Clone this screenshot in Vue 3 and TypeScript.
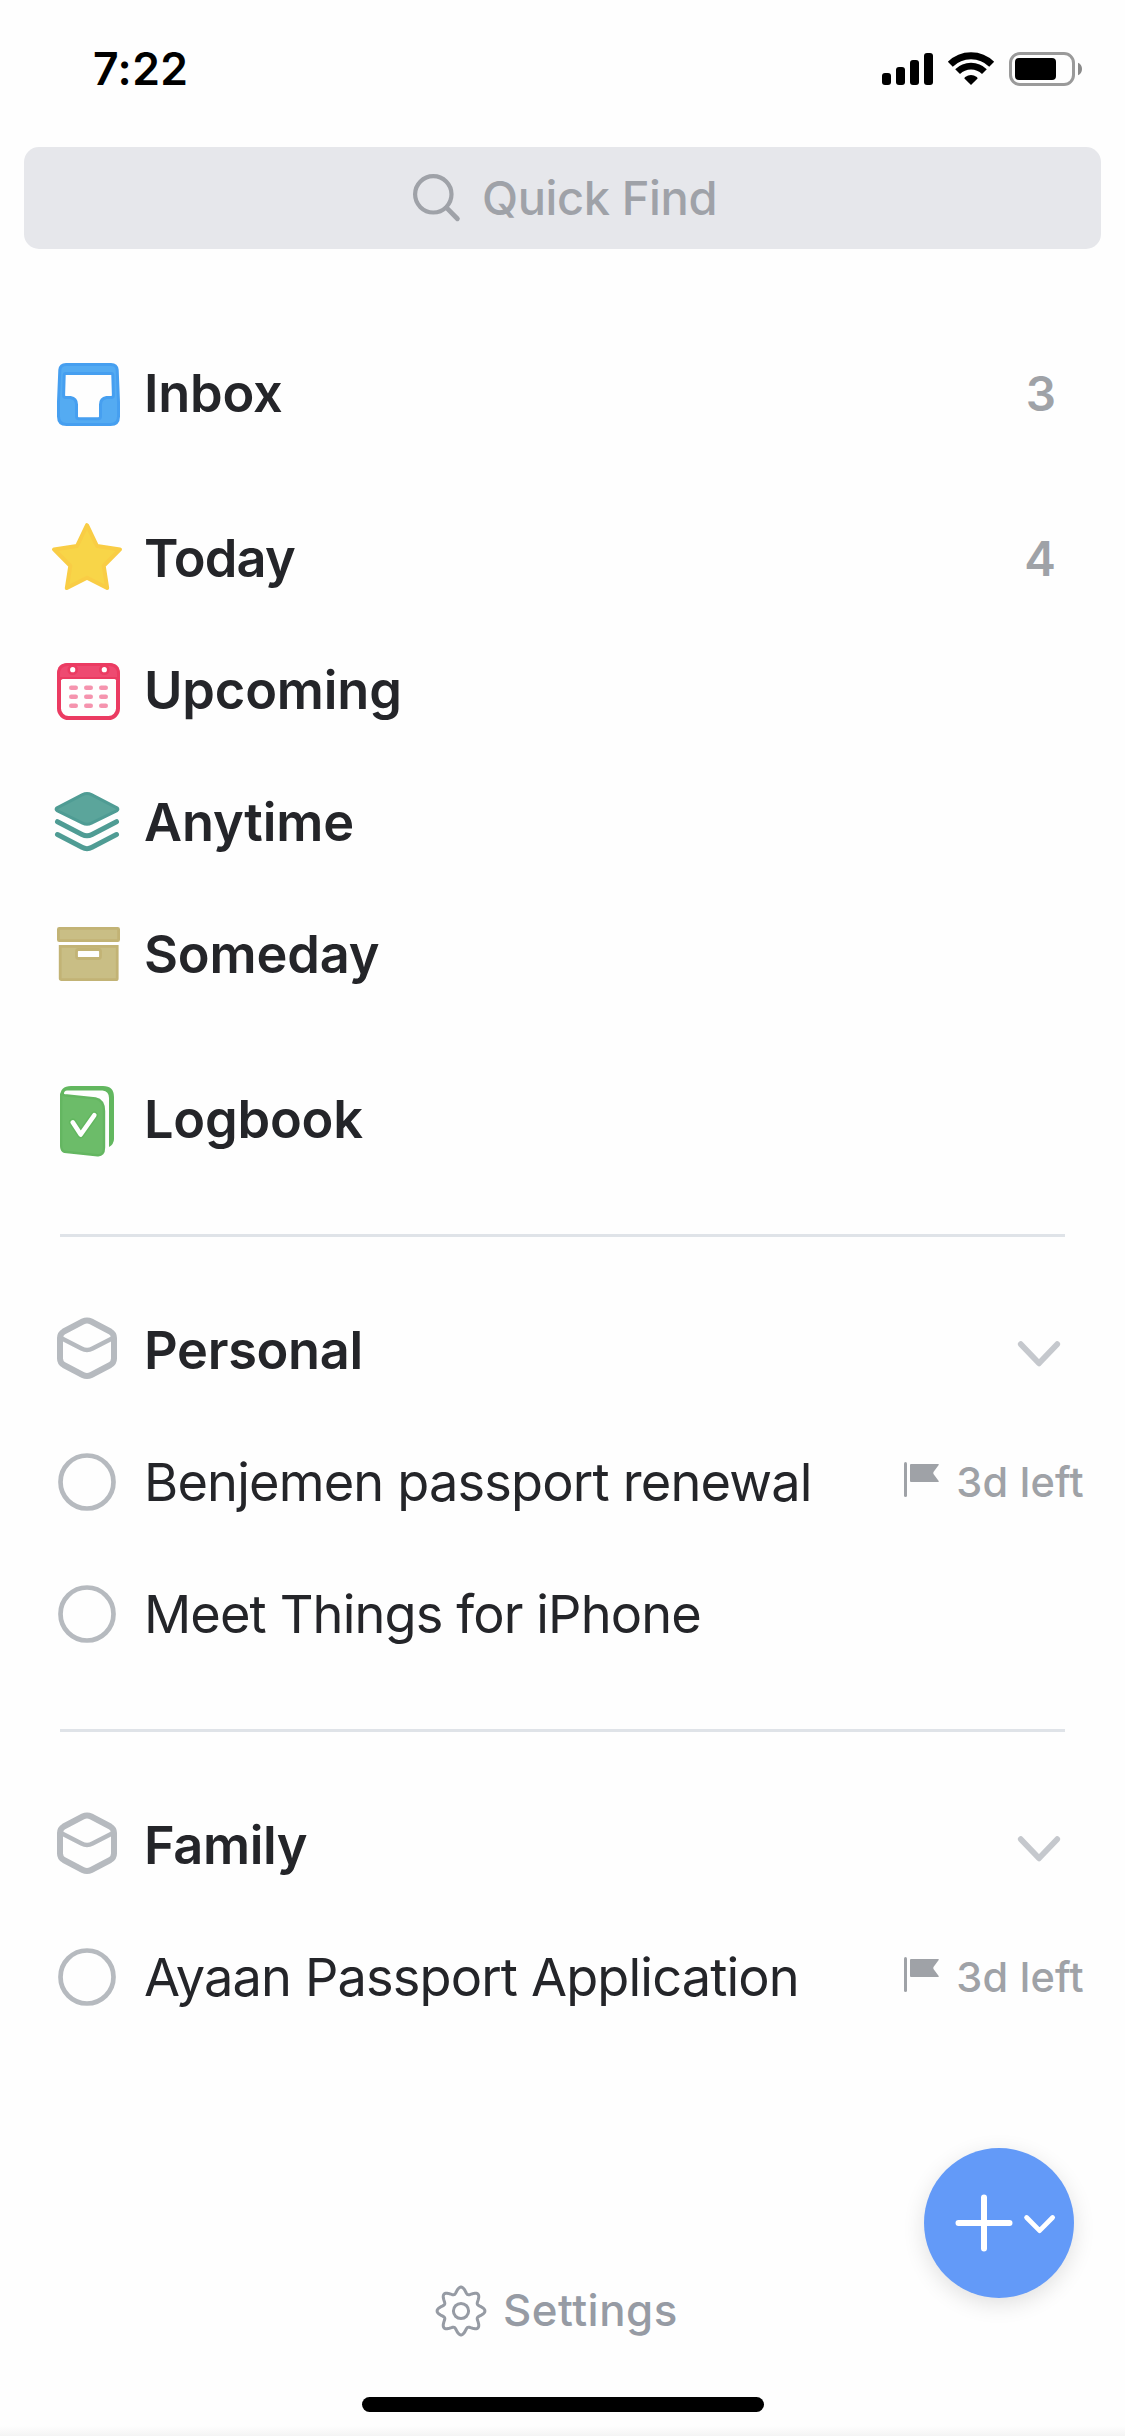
<script setup lang="ts">
type IconName = 'inbox' | 'today' | 'upcoming' | 'anytime' | 'someday' | 'logbook'

interface ListItem {
  icon: IconName
  label: string
  tracking: number
  count?: number
}

interface Project {
  title: string
  tracking: number
  deadline?: string
}

interface Area {
  title: string
  tracking: number
  projects: Project[]
}

const groups: ListItem[][] = [
  [{ icon: 'inbox', label: 'Inbox', tracking: -0.2, count: 3 }],
  [
    { icon: 'today', label: 'Today', tracking: -0.8, count: 4 },
    { icon: 'upcoming', label: 'Upcoming', tracking: -0.15 },
    { icon: 'anytime', label: 'Anytime', tracking: -0.15 },
    { icon: 'someday', label: 'Someday', tracking: -0.15 },
  ],
  [{ icon: 'logbook', label: 'Logbook', tracking: -0.2 }],
]

const areas: Area[] = [
  {
    title: 'Personal',
    tracking: -0.3,
    projects: [
      { title: 'Benjemen passport renewal', tracking: -0.82, deadline: '3d left' },
      { title: 'Meet Things for iPhone', tracking: -0.87 },
    ],
  },
  {
    title: 'Family',
    tracking: -0.4,
    projects: [{ title: 'Ayaan Passport Application', tracking: -0.85, deadline: '3d left' }],
  },
]

// Outline of the eight-lobed gear around (26, 26)
const gearPath: string = (() => {
  const points: string[] = []
  for (let i = 0; i < 160; i++) {
    const a = (i / 160) * Math.PI * 2
    const r = 20.8 + 3.1 * Math.cos(8 * a)
    points.push(`${(26 + r * Math.cos(a)).toFixed(2)} ${(26 + r * Math.sin(a)).toFixed(2)}`)
  }
  return `M${points.join('L')}Z`
})()

const dashRows = [33.7, 42.7, 51.7]
const dashCols = [20, 35, 50]
</script>

<template>
  <main class="screen">
    <header class="status">
      <span class="time">7:22</span>
      <div class="indicators">
        <svg width="51" height="34" viewBox="0 0 51 34">
          <rect x="0" y="21" width="9" height="12" rx="3" />
          <rect x="14" y="15" width="9" height="18" rx="3" />
          <rect x="28" y="8" width="9" height="25" rx="3" />
          <rect x="42" y="1" width="9" height="32" rx="3" />
        </svg>
        <svg class="wifi" width="46" height="34" viewBox="0 0 46 34">
          <g fill="none" stroke="#000">
            <path d="M2.3 12.3A29.3 29.3 0 0 1 43.7 12.3" stroke-width="7" />
            <path d="M9.6 19.6A19 19 0 0 1 36.4 19.6" stroke-width="6.8" />
          </g>
          <path d="M23 33L16.4 26.4Q16.4 25.6 17.2 25A10 10 0 0 1 28.8 25Q29.6 25.6 29.6 26.4Z" />
        </svg>
        <svg class="battery" width="73" height="34" viewBox="0 0 73 34">
          <rect x="1.5" y="1.5" width="63" height="31" rx="9.5" fill="none" stroke="#9a9a9a" stroke-width="3" />
          <rect x="6" y="6" width="41" height="22" rx="4" />
          <path d="M69 10.7Q73 12.5 73 17T69 23.3Z" fill="#8a8a8a" />
        </svg>
      </div>
    </header>

    <div class="search">
      <svg width="48" height="48" viewBox="0 0 48 48" fill="none" stroke="#9fa2a8" stroke-linecap="round">
        <circle cx="20.300" cy="20.300" r="18.200" stroke-width="4.200" />
        <path d="M33.700 33.900L44.400 44.700" stroke-width="4.800" />
      </svg>
      <span class="search-label">Quick Find</span>
    </div>

    <nav class="lists">
      <section v-for="(group, g) in groups" :key="g" class="group">
        <div v-for="item in group" :key="item.label" class="row">
          <svg class="icon" width="72" height="72" viewBox="0 0 72 72">
            <g v-if="item.icon === 'inbox'" stroke="#469ff0" stroke-width="3" stroke-linejoin="round">
              <path
                fill="#54abf2"
                d="M15 7.5H60Q65.6 7.5 66.2 13L67.5 45V59.5Q67.5 67.5 59.5 67.5H15.500Q7.500 67.5 7.500 59.500V45L8.800 13Q9.400 7.500 15 7.500Z"
              />
              <path
                fill="#fefefe"
                d="M14.500 16.500H60.500Q61.700 16.500 61.800 18L62.400 38.200Q62.400 40.500 60.300 40.500H55.500Q49.500 41.500 49.500 47.500V59.500Q49.500 61.700 47.300 61.700H27.700Q25.500 61.700 25.500 59.500V47.500Q25.500 41.500 19.500 40.500H14.700Q12.600 40.500 12.600 38.200L13.200 18Q13.300 16.500 14.500 16.500Z"
              />
            </g>
            <path
              v-else-if="item.icon === 'today'"
              fill="#f8d548"
              stroke="#f9cd45"
              stroke-width="4"
              stroke-linejoin="round"
              d="M36 3.200L46 24L69 27.400L52.700 43.900L56.200 66L36 55.700L15.800 66L19.300 43.900L3 27.400L26 24Z"
            />
            <g v-else-if="item.icon === 'upcoming'">
              <rect x="8" y="11" width="59" height="53" rx="9.500" fill="#fefefe" stroke="#eb3b62" stroke-width="4" />
              <path fill="#eb3b62" d="M6 26V20Q6 9 17 9H58Q69 9 69 20V26Z" />
              <path fill="#ee4a71" d="M9 23V20Q9 12 17 12H58Q66 12 66 20V23Z" />
              <rect x="10.300" y="25" width="54.700" height="5" rx="1.500" fill="#fefefe" />
              <g v-for="x in [21.7, 53.3]" :key="x">
                <circle :cx="x" cy="15.700" r="5.300" fill="#eb3b62" />
                <circle :cx="x" cy="15.700" r="2.600" fill="#fff" />
              </g>
              <g stroke="#f593ae" stroke-width="4.400" stroke-linecap="round">
                <template v-for="y in dashRows" :key="y">
                  <path v-for="x in dashCols" :key="x" :d="`M${x + 0.2} ${y}h4.600`" />
                </template>
              </g>
            </g>
            <g v-else-if="item.icon === 'anytime'" stroke="#4f9c94" fill="none" stroke-linejoin="round" stroke-linecap="round">
              <path
                fill="#5ba59b"
                stroke-width="3"
                d="M31.500 8.600Q36 6.400 40.500 8.600L66 21.800Q67.800 23.200 66 24.600L40.500 37.200Q36 39.400 31.500 37.200L6 24.600Q4.200 23.200 6 21.800Z"
              />
              <path stroke-width="5" d="M6.500 35.700L31 48.500Q36 51.200 41 48.500L65.500 35.700" />
              <path stroke-width="5" d="M6.500 48.500L31 61.300Q36 64 41 61.300L65.500 48.500" />
            </g>
            <g v-else-if="item.icon === 'someday'" fill="#c9be85" stroke="#c2b375" stroke-width="2.800">
              <rect x="7.400" y="10.400" width="60.200" height="12.200" rx=".8" />
              <path d="M9.200 28.400H66.200V60.400Q66.200 61.600 65 61.600H10.400Q9.200 61.600 9.200 60.400Z" />
              <rect x="25.500" y="31.500" width="24" height="9" rx="2" fill="#fefefe" />
            </g>
            <g v-else>
              <path
                fill="#62b75f"
                d="M9 30V14Q9 3 20 3H52Q63 3 63 14V56Q63 61 58 64V15Q58 8.200 51.500 7.400H16Q13 7.600 13 10.500V30Z"
              />
              <path
                fill="#6cbc69"
                stroke="#64b661"
                stroke-width="2.400"
                stroke-linejoin="round"
                d="M10.200 11.500L13.500 12.200L44.500 15.400Q53 17.200 53 28V64.500Q53 72.800 46.500 72.200L13.500 68.800Q10.200 67.500 10.200 63Z"
              />
              <path
                d="M21.700 39.300L29.700 51.500L43.300 32.200"
                fill="none"
                stroke="#62b75f"
                stroke-width="7.500"
                stroke-linecap="round"
                stroke-linejoin="round"
              />
              <path
                d="M21.700 39.300L29.700 51.500L43.300 32.200"
                fill="none"
                stroke="#fff"
                stroke-width="4.600"
                stroke-linecap="round"
                stroke-linejoin="round"
              />
            </g>
          </svg>
          <span class="label strong" :style="{ letterSpacing: item.tracking + 'px' }">{{ item.label }}</span>
          <span v-if="item.count" class="count">{{ item.count }}</span>
        </div>
      </section>
    </nav>

    <section v-for="area in areas" :key="area.title" class="area">
      <div class="row">
        <svg class="icon" width="72" height="72" viewBox="0 0 72 72" fill="none" stroke="#b6babf">
          <path
            stroke-width="6"
            d="M31.800 7.500Q36 5.300 40.200 7.500L59.200 17.500Q63 19.700 63 24V44.500Q63 48.800 59.200 51L40.200 61Q36 63.200 31.800 61L12.800 51Q9 48.800 9 44.500V24Q9 19.700 12.800 17.500Z"
          />
          <path stroke-width="4.400" d="M10.500 24.200L30.500 34.500Q36 37.400 41.500 34.500L61.500 24.200" />
        </svg>
        <span class="label strong" :style="{ letterSpacing: area.tracking + 'px' }">{{ area.title }}</span>
        <svg class="chevron" width="44" height="28" viewBox="0 0 44 28">
          <path d="M3.800 4.200L22 23.300L40.200 4.200" fill="none" stroke="#c5c8cd" stroke-width="5.800" stroke-linecap="round" stroke-linejoin="round" />
        </svg>
      </div>
      <div v-for="project in area.projects" :key="project.title" class="row">
        <svg class="icon" width="72" height="72" viewBox="0 0 72 72">
          <circle cx="36" cy="36" r="26.500" fill="none" stroke="#b6babf" stroke-width="4.700" />
        </svg>
        <span class="label" :style="{ letterSpacing: project.tracking + 'px' }">{{ project.title }}</span>
        <div v-if="project.deadline" class="deadline">
          <svg width="35" height="35" viewBox="0 0 35 35" fill="#9fa2a7">
            <rect x="0" y="0" width="3" height="35" rx="1.500" />
            <path d="M7 2H34Q35.500 2 34.500 3.200L29.500 10Q29 11 29.500 12L34.500 18.800Q35.500 20 34 20H7Q6 20 6 19V3Q6 2 7 2Z" />
          </svg>
          <span>{{ project.deadline }}</span>
        </div>
      </div>
    </section>

    <footer class="footer">
      <div class="settings">
        <svg width="52" height="52" viewBox="0 0 52 52" fill="none" stroke="#969ba4" stroke-width="3">
          <path :d="gearPath" stroke-linejoin="round" />
          <circle cx="26" cy="26" r="7.600" />
        </svg>
        <span>Settings</span>
      </div>
      <div class="home-bar"></div>
    </footer>

    <button class="fab" aria-label="New to-do">
      <svg width="150" height="150" viewBox="0 0 150 150" fill="none" stroke="#fff" stroke-linecap="round" stroke-linejoin="round">
        <path d="M60 49.500V100.500M34.500 75H85.500" stroke-width="6" />
        <path d="M102.600 69.500L115.600 82.600L128.600 69.500" stroke-width="4.800" />
      </svg>
    </button>
  </main>
</template>

<style>
body {
  margin: 0;
  background: #fefefe;
}
</style>

<style scoped>
.screen {
  position: relative;
  box-sizing: border-box;
  width: 1125px;
  height: 2436px;
  overflow: hidden;
  display: flex;
  flex-direction: column;
  background: linear-gradient(#fefefe 2426px, #f4f4f4 2436px);
  font-family: Inter, "Liberation Sans", sans-serif;
  color: #242529;
}
.screen svg {
  display: block;
  flex: none;
  overflow: visible;
}
.status {
  box-sizing: border-box;
  height: 147px;
  padding: 0 43px 10px 93px;
  display: flex;
  align-items: center;
  justify-content: space-between;
}
.time {
  font-size: 44.500px;
  font-weight: 600;
  letter-spacing: 0.4px;
  color: #000;
}
.indicators {
  display: flex;
}
.wifi {
  margin-left: 15px;
}
.battery {
  margin-left: 15px;
}
.search {
  height: 102px;
  margin: 0 24px;
  border-radius: 15px;
  background: #e6e7eb;
  display: flex;
  align-items: center;
  padding-left: 389px;
  gap: 21px;
}
.search-label {
  margin-bottom: 2px;
  font-size: 47px;
  font-weight: 450;
  color: #9fa2a8;
  letter-spacing: -0.4px;
}
.lists {
  margin-top: 78px;
  display: flex;
  flex-direction: column;
  gap: 33px;
}
.row {
  box-sizing: border-box;
  height: 132px;
  padding-left: 51px;
  display: flex;
  align-items: center;
  white-space: nowrap;
}
.label {
  margin-left: 21px;
  flex: 1;
  font-size: 52.300px;
  font-weight: 400;
}
.strong {
  font-weight: 600;
}
.count {
  margin-right: 69px;
  font-size: 47.500px;
  font-weight: 600;
  color: #9fa2a7;
}
.chevron {
  margin: 8px 64px 0 0;
}
.area {
  margin-top: 49px;
}
.area::before {
  content: "";
  display: block;
  height: 3px;
  margin: 0 60px 47px;
  background: #dfe3e8;
}
.deadline {
  display: flex;
  align-items: center;
  gap: 17px;
  margin-right: 41px;
  font-size: 41.500px;
  font-weight: 500;
  letter-spacing: 0.25px;
  color: #9fa2a7;
}
.deadline svg {
  margin-bottom: 5px;
}
.footer {
  margin-top: auto;
  padding-bottom: 24px;
  display: flex;
  flex-direction: column;
  align-items: center;
}
.settings {
  align-self: stretch;
  padding-left: 435px;
  margin-bottom: 59px;
  display: flex;
  align-items: center;
  gap: 16px;
  font-size: 43.800px;
  line-height: 54px;
  font-weight: 500;
  letter-spacing: 0.5px;
  color: #969ba4;
}
.home-bar {
  width: 402px;
  height: 15px;
  border-radius: 8px;
  background: #000;
}
.fab {
  position: absolute;
  right: 51px;
  bottom: 138px;
  width: 150px;
  height: 150px;
  padding: 0;
  border: 0;
  border-radius: 50%;
  background: #639af8;
  box-shadow: 0 6px 22px rgba(0, 0, 0, 0.12);
}
</style>
